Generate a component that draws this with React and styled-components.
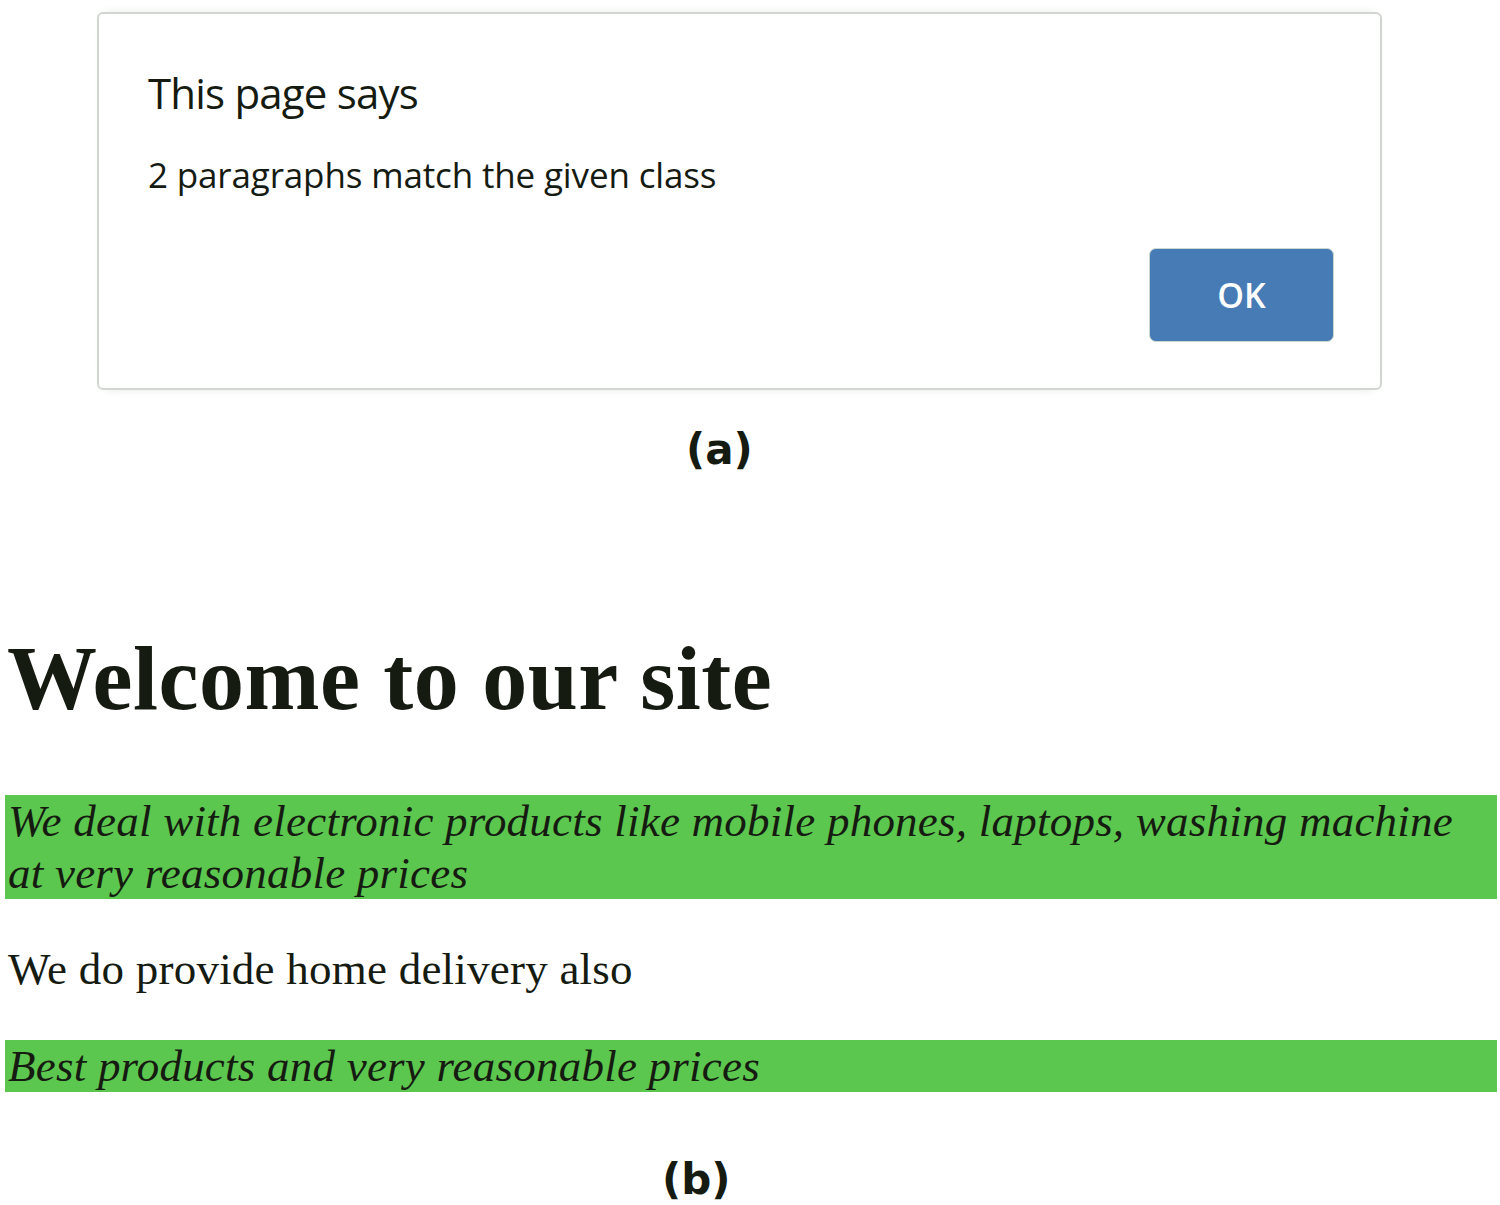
import React from "react";
import styled, { createGlobalStyle } from "styled-components";

const GlobalStyle = createGlobalStyle`
  html, body {
    margin: 0;
    padding: 0;
    background: #ffffff;
  }

  body {
    width: 1500px;
    color: #161b12;
    font-family: "Liberation Serif", "Times New Roman", serif;
  }
`;

const Figure = styled.div`
  display: flex;
  flex-direction: column;
  width: 1500px;
`;

// alert dialog (a)

const Dialog = styled.div`
  box-sizing: border-box;
  width: 1285px;
  height: 378px;
  margin: 12px 0 0 97px;
  padding: 54px 46px 0 49px;
  border: 2px solid #d2d6d0;
  border-radius: 6px;
  background: #ffffff;
  box-shadow: 0 -6px 10px -8px rgba(0, 0, 0, 0.12), 0 6px 10px -8px rgba(0, 0, 0, 0.12);
  display: flex;
  flex-direction: column;
  font-family: "Open Sans", "Noto Sans", sans-serif;
  color: #161b12;
`;

const DialogTitle = styled.div`
  font-size: 42px;
  line-height: 50px;
  letter-spacing: -0.8px;
  height: 50px;
`;

const DialogMessage = styled.div`
  margin-top: 37px;
  font-size: 35px;
  line-height: 40px;
  letter-spacing: -0.15px;
`;

const DialogActions = styled.div`
  display: flex;
  justify-content: flex-end;
  margin-top: 53px;
`;

const OkButton = styled.button`
  box-sizing: border-box;
  width: 185px;
  height: 94px;
  border: 1px solid #cbd8cf;
  border-radius: 7px;
  background: #467bb6;
  color: #ffffff;
  font-family: "Open Sans", "Noto Sans", sans-serif;
  font-size: 34px;
  font-weight: 600;
  cursor: pointer;
`;

const Caption = styled.div`
  margin-top: ${(p) => p.$top}px;
  margin-left: ${(p) => p.$left}px;
  font-family: "DejaVu Sans", Verdana, sans-serif;
  font-weight: bold;
  font-size: 42px;
  line-height: 42px;
  height: 42px;
`;

// rendered page (b)

const Page = styled.div`
  padding: 0 3px 0 5px;
  display: flex;
  flex-direction: column;
`;

const Heading = styled.h1`
  margin: 158px 0 0;
  padding-left: 2px;
  font-family: "Liberation Serif", "Times New Roman", serif;
  font-size: 90px;
  line-height: 100px;
  letter-spacing: 0.5px;
  font-weight: bold;
`;

const Paragraph = styled.p`
  margin: ${(p) => p.$top}px 0 0;
  padding-left: 3px;
  font-family: "Liberation Serif", "Times New Roman", serif;
  font-size: 45px;
  line-height: 52px;
  letter-spacing: 0.23px;
  font-style: ${(p) => (p.$match ? "italic" : "normal")};
  background: ${(p) => (p.$match ? "#5cc74e" : "transparent")};
`;

const App = () => {
  return (
    <Figure>
      <GlobalStyle />
      <Dialog>
        <DialogTitle>This page says</DialogTitle>
        <DialogMessage>2 paragraphs match the given class</DialogMessage>
        <DialogActions>
          <OkButton>OK</OkButton>
        </DialogActions>
      </Dialog>
      <Caption $top={39} $left={686}>(a)</Caption>

      <Page>
        <Heading>Welcome to our site</Heading>
        <Paragraph $match $top={66}>
          We deal with electronic products like mobile phones, laptops, washing machine at very
          reasonable prices
        </Paragraph>
        <Paragraph $top={44}>We do provide home delivery also</Paragraph>
        <Paragraph $match $top={45}>
          Best products and very reasonable prices
        </Paragraph>
      </Page>
      <Caption $top={67} $left={662}>(b)</Caption>
    </Figure>
  );
};

export default App;
